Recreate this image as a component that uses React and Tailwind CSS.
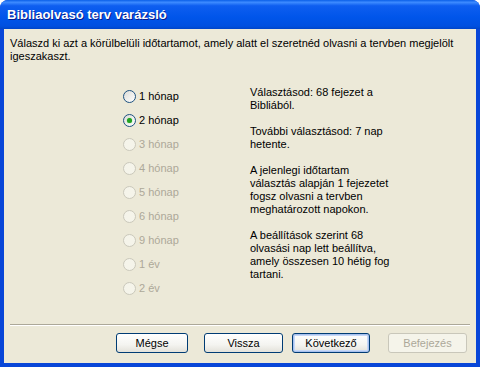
import React from "react";

const font = { fontFamily: "Tahoma, 'Liberation Sans', Arial, sans-serif" };

function Radio({ label, checked, disabled }) {
  return (
    <div className="flex items-center h-[24px]">
      <div
        className={
          "w-[13px] h-[13px] rounded-full border flex items-center justify-center " +
          (disabled
            ? "border-[#CAC8BB] bg-[#F5F4EA]"
            : "border-[#1C5180] bg-[linear-gradient(135deg,#DCDCD7,#FFFFFF)]")
        }
      >
        {checked && (
          <div className="w-[5px] h-[5px] rounded-full bg-[#21A121] shadow-[0_0_1px_#55D455]" />
        )}
      </div>
      <span className={"ml-[3px] leading-[13px] " + (disabled ? "text-[#ACA899]" : "text-black")}>
        {label}
      </span>
    </div>
  );
}

function Btn({ children, disabled, def, w }) {
  return (
    <div
      className={
        "h-[20px] rounded-[3px] border flex items-center justify-center " +
        w +
        " " +
        (disabled
          ? "border-[#C9C7BA] bg-[#F5F4EA] text-[#ACA899]"
          : "border-[#003C74] bg-[linear-gradient(180deg,#FFFFFF,#F4F4F0_60%,#E3E2DA)] text-black") +
        (def ? " shadow-[inset_0_0_0_1px_#A8C1EE,inset_0_0_0_2px_#C6D8F7]" : "")
      }
    >
      {children}
    </div>
  );
}

export default function App() {
  const radios = [
    ["1 hónap", false, false],
    ["2 hónap", true, false],
    ["3 hónap", false, true],
    ["4 hónap", false, true],
    ["5 hónap", false, true],
    ["6 hónap", false, true],
    ["9 hónap", false, true],
    ["1 év", false, true],
    ["2 év", false, true],
  ];
  return (
    <div className="w-[480px] h-[367px] bg-white text-[11px]" style={font}>
      <div className="w-full h-full flex flex-col rounded-t-[8px] overflow-hidden bg-[#0846D8]">
        <div className="h-[29px] shrink-0 flex items-center pl-[7px] bg-[linear-gradient(180deg,#0A5FE8_0%,#3D8BFF_8%,#0E5EF0_20%,#0055EA_60%,#0050E0_90%,#0045C8_100%)]">
          <span
            className="text-white font-bold text-[13px] pt-[1px] [text-shadow:1px_1px_0_#0A1D8C]"
            style={{ fontFamily: "'Trebuchet MS', 'Liberation Sans', sans-serif" }}
          >
            Bibliaolvasó terv varázsló
          </span>
        </div>
        <div className="flex-1 mx-[4px] mb-[4px] bg-[#ECE9D8] flex flex-col text-black">
          <div className="pt-[8px] pl-[6px] pr-[6px] leading-[13px]">
            Válaszd ki azt a körülbelüli időtartamot, amely alatt el szeretnéd olvasni a tervben megjelölt
            <br />
            igeszakaszt.
          </div>
          <div className="flex mt-[21px]">
            <div className="ml-[119px] w-[127px] flex flex-col">
              {radios.map(([l, c, d]) => (
                <Radio key={l} label={l} checked={c} disabled={d} />
              ))}
            </div>
            <div className="pt-[2px] leading-[13px] w-[200px] flex flex-col gap-[13px]">
              <p>Választásod: 68 fejezet a<br />Bibliából.</p>
              <p>További választásod: 7 nap<br />hetente.</p>
              <p>
                A jelenlegi időtartam<br />választás alapján 1 fejezetet<br />fogsz olvasni a tervben<br />meghatározott napokon.
              </p>
              <p>
                A beállítások szerint 68<br />olvasási nap lett beállítva,<br />amely összesen 10 hétig fog<br />tartani.
              </p>
            </div>
          </div>
          <div className="flex-1" />
          <div className="mx-[6px] h-[2px] border-t border-[#ACA899] border-b border-b-white" />
          <div className="flex items-center mt-[7px] mb-[10px] pl-[112px]">
            <Btn w="w-[72px]">Mégse</Btn>
            <div className="w-[16px]" />
            <Btn w="w-[79px]">Vissza</Btn>
            <div className="w-[9px]" />
            <Btn w="w-[78px]" def>Következő</Btn>
            <div className="w-[18px]" />
            <Btn w="w-[79px]" disabled>Befejezés</Btn>
          </div>
        </div>
      </div>
    </div>
  );
}
